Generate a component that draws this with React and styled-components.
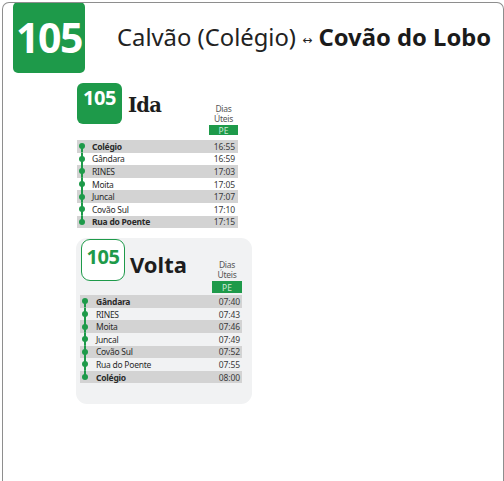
import React from "react";
import styled, { createGlobalStyle } from "styled-components";

const GREEN = "#1e9a4a";

const GlobalStyle = createGlobalStyle`
  html, body {
    margin: 0;
    padding: 0;
    background: #ffffff;
    font-family: "Noto Sans", "Open Sans", sans-serif;
    overflow: hidden;
  }
`;

const ida = [
  { stop: "Colégio", time: "16:55", bold: true },
  { stop: "Gândara", time: "16:59" },
  { stop: "RINES", time: "17:03" },
  { stop: "Moita", time: "17:05" },
  { stop: "Juncal", time: "17:07" },
  { stop: "Covão Sul", time: "17:10" },
  { stop: "Rua do Poente", time: "17:15", bold: true },
];

const volta = [
  { stop: "Gândara", time: "07:40", bold: true },
  { stop: "RINES", time: "07:43" },
  { stop: "Moita", time: "07:46" },
  { stop: "Juncal", time: "07:49" },
  { stop: "Covão Sul", time: "07:52" },
  { stop: "Rua do Poente", time: "07:55" },
  { stop: "Colégio", time: "08:00", bold: true },
];

function Timetable({ rows, inset }) {
  return (
    <Table>
      {rows.map((r, i) => (
        <Row key={r.stop} $shaded={i % 2 === 0}>
          <Marker $first={i === 0} $last={i === rows.length - 1}>
            <Dot />
          </Marker>
          <StopName $bold={r.bold} $inset={inset}>{r.stop}</StopName>
          <Time $inset={inset}>{r.time}</Time>
        </Row>
      ))}
    </Table>
  );
}

function ColumnHead({ inset }) {
  return (
    <DayHead $inset={inset}>
      <DayLabel>Dias</DayLabel>
      <DayLabel>Úteis</DayLabel>
      <Period $inset={inset}>PE</Period>
    </DayHead>
  );
}

export default function App() {
  return (
    <>
      <GlobalStyle />
      <Frame>
        <Header>
          <BigBadge>105</BigBadge>
          <Title>
            Calvão (Colégio) <Arrow>↔</Arrow> <strong>Covão do Lobo</strong>
          </Title>
        </Header>

        <Content>
          <Section>
            <SectionHead>
              <LineBadge>105</LineBadge>
              <Direction $serif>Ida</Direction>
              <ColumnHead />
            </SectionHead>
            <Timetable rows={ida} />
          </Section>

          <Card>
            <SectionHead $card>
              <LineBadge $outline>105</LineBadge>
              <Direction $card>Volta</Direction>
              <ColumnHead inset />
            </SectionHead>
            <Timetable rows={volta} inset />
          </Card>
        </Content>
      </Frame>
    </>
  );
}

const Frame = styled.div`
  margin: 2px 0 0 2px;
  height: 479px;
  border: 1px solid #8e8e8e;
  border-bottom: none;
  border-radius: 7px 7px 0 0;
  box-sizing: border-box;
  overflow: hidden;
`;

const Header = styled.div`
  display: flex;
  align-items: center;
  margin-top: -1px;
  padding-left: 10px;
`;

const BigBadge = styled.div`
  width: 72px;
  height: 71px;
  border-radius: 5px;
  background: ${GREEN};
  color: #ffffff;
  font-size: 41px;
  font-weight: 700;
  letter-spacing: -1.5px;
  display: flex;
  align-items: center;
  justify-content: center;
  padding-bottom: 2px;
  box-sizing: border-box;
`;

const Title = styled.h1`
  margin: 0 0 2px 32px;
  font-size: 23.8px;
  font-weight: 400;
  color: #222222;
  white-space: nowrap;

  strong {
    font-weight: 700;
    color: #1b1b1b;
  }
`;

const Arrow = styled.span`
  font-family: "DejaVu Sans", sans-serif;
  font-size: 12px;
  vertical-align: 2px;
`;

const Content = styled.div`
  display: flex;
  flex-direction: column;
  padding-left: 74px;
  margin-top: 10px;
`;

const Section = styled.div`
  width: 161px;
`;

const Card = styled.div`
  margin: 10px 0 0 -1px;
  width: 176px;
  box-sizing: border-box;
  padding: 1px 10px 21px 4px;
  background: #f1f2f3;
  border-radius: 11px;
`;

const SectionHead = styled.div`
  display: flex;
  align-items: flex-start;
  height: ${(p) => (p.$card ? "56px" : "53px")};
  margin-bottom: ${(p) => (p.$card ? "0" : "4px")};
  padding-left: ${(p) => (p.$card ? "1px" : "0")};
`;

const LineBadge = styled.div`
  width: ${(p) => (p.$outline ? "44px" : "45px")};
  height: ${(p) => (p.$outline ? "42px" : "41px")};
  box-sizing: border-box;
  border-radius: ${(p) => (p.$outline ? "9px" : "6px")};
  background: ${(p) => (p.$outline ? "#ffffff" : GREEN)};
  border: ${(p) => (p.$outline ? `1.5px solid ${GREEN}` : "none")};
  color: ${(p) => (p.$outline ? GREEN : "#ffffff")};
  font-size: 20px;
  font-weight: 700;
  letter-spacing: -0.5px;
  line-height: 1;
  text-align: center;
  padding-top: ${(p) => (p.$outline ? "7px" : "5px")};
`;

const Direction = styled.div`
  margin: ${(p) => (p.$card ? "12px 0 0 5px" : "11px 0 0 6px")};
  font-size: ${(p) => (p.$card ? "22px" : "19.5px")};
  font-weight: 700;
  line-height: 1.2;
  color: #1d1d1d;
  font-family: ${(p) => (p.$serif ? '"DejaVu Serif", serif' : "inherit")};
  letter-spacing: ${(p) => (p.$serif ? "-0.8px" : "0")};
`;

const DayHead = styled.div`
  margin-left: auto;
  width: ${(p) => (p.$inset ? "30px" : "29px")};
  padding-top: 21px;
  display: flex;
  flex-direction: column;
  align-items: center;
`;

const DayLabel = styled.span`
  font-size: 8.5px;
  line-height: 10px;
  color: #555555;
  letter-spacing: -0.3px;
`;

const Period = styled.span`
  margin-top: 1px;
  align-self: stretch;
  height: ${(p) => (p.$inset ? "12px" : "10px")};
  background: ${GREEN};
  color: #cfe9d6;
  font-size: 8.5px;
  line-height: ${(p) => (p.$inset ? "13px" : "11px")};
  text-align: center;
`;

const Table = styled.div`
  display: flex;
  flex-direction: column;
`;

const Row = styled.div`
  display: flex;
  align-items: center;
  height: 12.6px;
  background: ${(p) => (p.$shaded ? "#d3d3d3" : "transparent")};
`;

const Marker = styled.div`
  flex: none;
  width: 10px;
  height: 100%;
  display: flex;
  align-items: center;
  justify-content: center;
  background-image: linear-gradient(${GREEN}, ${GREEN});
  background-repeat: no-repeat;
  background-size: ${(p) => (p.$first || p.$last ? "2px 50%" : "2px 100%")};
  background-position: ${(p) =>
    p.$first ? "center bottom" : p.$last ? "center top" : "center"};
`;

const Dot = styled.span`
  width: 6px;
  height: 6px;
  border-radius: 50%;
  background: ${GREEN};
`;

const StopName = styled.span`
  flex: 1;
  margin-left: ${(p) => (p.$inset ? "6px" : "5px")};
  font-size: 8.5px;
  font-weight: ${(p) => (p.$bold ? 700 : 400)};
  letter-spacing: -0.25px;
  color: #2a2a2a;
  white-space: nowrap;
`;

const Time = styled.span`
  padding-right: ${(p) => (p.$inset ? "2px" : "3px")};
  font-size: 8.5px;
  color: #3a3a3a;
  letter-spacing: -0.1px;
`;
